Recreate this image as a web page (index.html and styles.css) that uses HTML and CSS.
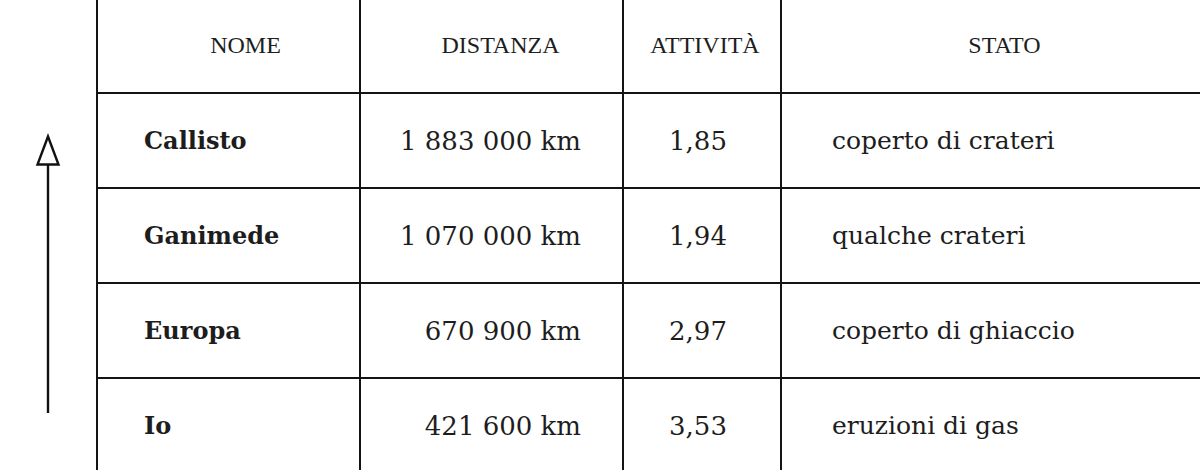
FILE: index.html
```html
<!DOCTYPE html>
<html lang="it">
<head>
<meta charset="utf-8">
<title>Lune di Giove</title>
<link rel="stylesheet" href="styles.css">
</head>
<body>
<div class="page">
  <div class="axis">
    <svg class="arrow" width="96" height="470" viewBox="0 0 96 470" aria-hidden="true">
      <line x1="48" y1="164" x2="48" y2="413" stroke="#111" stroke-width="2.4"/>
      <polygon points="48,136.5 37.5,164.5 58.5,164.5" fill="none" stroke="#111" stroke-width="2.4" stroke-linejoin="miter"/>
    </svg>
  </div>
  <table class="moons">
    <colgroup>
      <col class="c-name">
      <col class="c-dist">
      <col class="c-act">
      <col class="c-state">
    </colgroup>
    <thead>
      <tr>
        <th class="h-name">NOME</th>
        <th class="h-dist">DISTANZA</th>
        <th class="h-act">ATTIVITÀ</th>
        <th class="h-state">STATO</th>
      </tr>
    </thead>
    <tbody>
      <tr>
        <td class="name">Callisto</td>
        <td class="dist">1 883 000 km</td>
        <td class="act">1,85</td>
        <td class="state">coperto di crateri</td>
      </tr>
      <tr>
        <td class="name">Ganimede</td>
        <td class="dist">1 070 000 km</td>
        <td class="act">1,94</td>
        <td class="state">qualche crateri</td>
      </tr>
      <tr>
        <td class="name">Europa</td>
        <td class="dist">670 900 km</td>
        <td class="act">2,97</td>
        <td class="state">coperto di ghiaccio</td>
      </tr>
      <tr>
        <td class="name">Io</td>
        <td class="dist">421 600 km</td>
        <td class="act">3,53</td>
        <td class="state">eruzioni di gas</td>
      </tr>
    </tbody>
  </table>
</div>
</body>
</html>
```

FILE: styles.css
```css
html, body {
  margin: 0;
  padding: 0;
  background: #fff;
}
body {
  width: 1200px;
  height: 470px;
  overflow: hidden;
  color: #1d1d1d;
  font-family: "DejaVu Serif", "Liberation Serif", serif;
}
.page {
  display: flex;
  align-items: flex-start;
  width: 1200px;
}
.axis {
  flex: 0 0 96px;
  height: 470px;
}
.arrow {
  display: block;
}
.moons {
  border-collapse: collapse;
  table-layout: fixed;
  width: 1104px;
  flex: 0 0 auto;
}
.c-name { width: 263px; }
.c-dist { width: 263px; }
.c-act { width: 158px; }
.c-state { width: 420px; }

.moons th,
.moons td {
  border: 2px solid #141414;
  padding: 0;
}
.moons th:last-child,
.moons td:last-child {
  border-right: none;
}
.moons th {
  border-top: none;
  height: 93px;
  box-sizing: border-box;
  vertical-align: top;
  padding-top: 31px;
  font-family: "Liberation Serif", serif;
  font-weight: normal;
  font-size: 24px;
  line-height: 28px;
  text-align: center;
  color: #1e1e1e;
}
.moons th.h-name { padding-left: 34px; }
.moons th.h-dist { padding-left: 18px; }
.moons th.h-act { padding-left: 6px; }
.moons th.h-state { padding-left: 26px; }

.moons td {
  height: 93px;
  vertical-align: middle;
  font-size: 25px;
  line-height: 30px;
  white-space: nowrap;
}
.moons td.name {
  font-weight: bold;
  font-size: 24px;
  padding-left: 46px;
  text-align: left;
}
.moons td.dist {
  font-size: 26px;
  text-align: right;
  padding-right: 41px;
}
.moons td.act {
  font-size: 26px;
  text-align: center;
  padding-right: 8px;
}
.moons td.state {
  text-align: left;
  padding-left: 50px;
}
```
